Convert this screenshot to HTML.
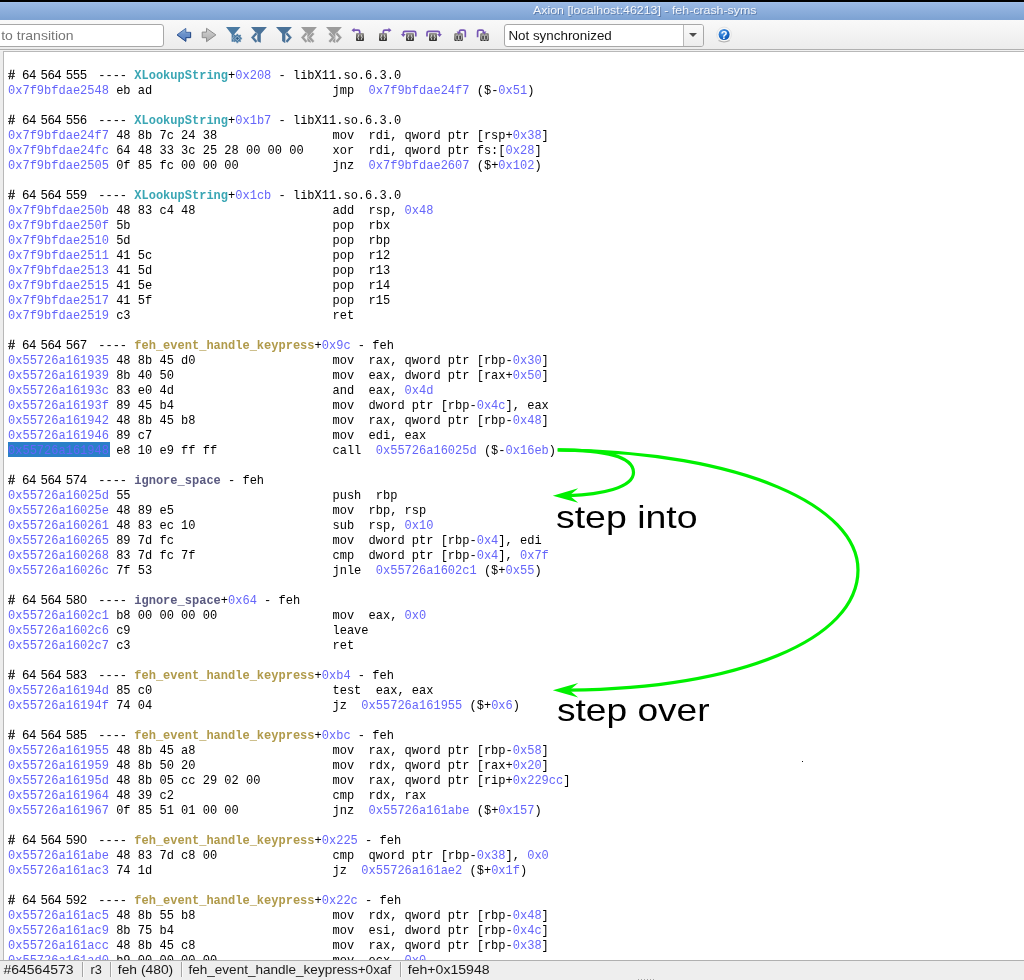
<!DOCTYPE html>
<html><head><meta charset="utf-8">
<style>
*{margin:0;padding:0;box-sizing:border-box}
html,body{width:1024px;height:980px;overflow:hidden;background:#fff}
body{position:relative;font-family:"Liberation Sans",sans-serif}
#blk{position:absolute;left:0;top:0;width:1024px;height:2px;background:#000}
#title{position:absolute;left:0;top:2px;width:1024px;height:18px;background:linear-gradient(#a6c4ec 0px,#9ab9e4 1px,#7ea3d3 17px);border-bottom:0}
#title span{position:absolute;left:533px;top:2px;font-size:12.3px;color:#f4f6fa;text-shadow:0 0 2px #4a6a98, 0 1px 1px #4a6a98;white-space:nowrap}
#tb{position:absolute;left:0;top:20px;width:1024px;height:29px;background:linear-gradient(#f9f9f9,#ececec)}
#tbl1{position:absolute;left:0;top:49px;width:1024px;height:1px;background:#b0b0b0}
#tbl2{position:absolute;left:0;top:50px;width:1024px;height:1px;background:#f2f2f2}
#lstrip{position:absolute;left:0;top:51px;width:3px;height:910px;background:#ededed}
#cont{position:absolute;left:3px;top:51px;width:1021px;height:910px;border-left:1px solid #b8b8b8;border-top:1px solid #b8b8b8;background:#fff;overflow:hidden}
#field{position:absolute;left:-10px;top:24px;width:174px;height:23px;border:1px solid #a8a8a8;border-radius:3px;background:#fff}
#field span{position:absolute;left:10px;top:3px;font-size:12.3px;color:#7a7a7a;white-space:nowrap}
#combo{position:absolute;left:504px;top:24px;width:200px;height:23px;border:1px solid #a8a8a8;border-radius:3px;background:#fff}
#combo span{position:absolute;left:4px;top:3px;font-size:12.3px;color:#1a1a1a;white-space:nowrap}
#combo .dd{position:absolute;left:178px;top:0;width:20px;height:21px;border-left:1px solid #b8b8b8;background:linear-gradient(#fafafa,#ececec);border-radius:0 2px 2px 0}
#combo .dd:after{content:"";position:absolute;left:5px;top:8px;border-left:4px solid transparent;border-right:4px solid transparent;border-top:4px solid #4c4c4c}
#code{position:absolute;left:8px;top:67px;width:1000px;height:893px;overflow:hidden}
#code .l{position:absolute;left:0;height:15px;line-height:15px;padding-top:2px;white-space:pre;font-family:"Liberation Mono",monospace;font-size:12.03px;color:#000}
#code b{font-weight:normal}
#code .n{color:#6565fa}
#hl{position:absolute;left:8px;top:442px;width:102px;height:15px;background:#2a7fc8}
#code .f{font-weight:bold}
#code .t{color:#3aa6b4}
#code .g{color:#b09a4a}
#code .s{color:#5a5a80}
#code i.num{font-style:normal;font-family:"Liberation Sans",sans-serif;font-size:12.5px;word-spacing:1.1px;display:inline-block;width:75.8px;padding-left:7px}
#code .h{padding-top:1px}
#code u{text-decoration:none;-webkit-text-stroke:0.35px #000}
#status{position:absolute;left:0;top:960px;width:1024px;height:20px;background:#eeeeee;border-top:1px solid #b0b0b0}
#status span{position:absolute;top:2px;font-size:12.3px;color:#1e1e1e;white-space:nowrap}
#status i{position:absolute;top:2px;width:1px;height:14px;background:#b4b4b4}
#big{position:absolute;font-family:"Liberation Sans",sans-serif;color:#000;white-space:nowrap}
svg{position:absolute;left:0;top:0;will-change:transform}
#code{will-change:transform}
</style></head><body>
<div id="blk"></div>
<div id="title"></div>
<div id="tb"></div>
<div id="field"></div>
<div id="combo"><div class="dd"></div></div>
<svg width="1024" height="60" viewBox="0 0 1024 60" style="position:absolute;left:0;top:0">
<defs>
<linearGradient id="gb" x1="0" y1="0" x2="0" y2="1"><stop offset="0" stop-color="#9cbfe0"/><stop offset="0.45" stop-color="#6a90c8"/><stop offset="1" stop-color="#5a84c8"/></linearGradient>
<linearGradient id="gg" x1="0" y1="0" x2="0" y2="1"><stop offset="0" stop-color="#d4d4d4"/><stop offset="1" stop-color="#aaaaaa"/></linearGradient>
<linearGradient id="gbox" x1="0" y1="0" x2="0" y2="1"><stop offset="0" stop-color="#9a9894"/><stop offset="0.5" stop-color="#5e5c58"/><stop offset="1" stop-color="#2a2a2a"/></linearGradient>
<radialGradient id="ghelp" cx="0.35" cy="0.3" r="0.8"><stop offset="0" stop-color="#5aa0ea"/><stop offset="0.6" stop-color="#1e6cc8"/><stop offset="1" stop-color="#0a4ea8"/></radialGradient>
</defs>
<text x="1.2" y="39.6" font-family="Liberation Sans" font-size="12.6" fill="#767676" textLength="72.4" lengthAdjust="spacingAndGlyphs">to transition</text>
<text x="508.4" y="39.8" font-family="Liberation Sans" font-size="12.6" fill="#161616" textLength="103.4" lengthAdjust="spacingAndGlyphs">Not synchronized</text>
<!-- back arrow -->
<path d="M177 34.8 L185.8 28.4 L185.8 32.3 L190.6 32.3 L190.6 37.6 L185.8 37.6 L185.8 41.3 Z" fill="url(#gb)" stroke="#3a609e" stroke-width="0.9" stroke-linejoin="round"/>
<path d="M190.6 32.3 L190.6 37.6 L185.8 37.6 L185.8 41.3 L177 34.8" fill="none" stroke="#274c88" stroke-width="0.9" stroke-linejoin="round"/>
<!-- forward arrow (gray) -->
<path d="M215.9 34.9 L206.5 28.3 L206.5 32.1 L202.2 32.1 L202.2 37.7 L206.5 37.7 L206.5 41.7 Z" fill="url(#gg)" stroke="#8c8c8c" stroke-width="1" stroke-linejoin="round"/>
<g fill="#4a7aa2">
<!-- filter gear -->
<path d="M226 27 L240.5 27 L234.5 34 L234 41.8 L231.6 41.8 L231.6 34.3 Z"/>
</g>
<g transform="translate(237.35 38.4)">
<path fill="#4a7aa2" stroke="#f2f2f2" stroke-width="0.35" d="M3.25 -1.31 L4.74 -0.75 L4.74 0.75 L3.25 1.31 L3.22 1.37 L3.88 2.82 L2.82 3.88 L1.37 3.22 L1.31 3.25 L0.75 4.74 L-0.75 4.74 L-1.31 3.25 L-1.37 3.22 L-2.82 3.88 L-3.88 2.82 L-3.22 1.37 L-3.25 1.31 L-4.74 0.75 L-4.74 -0.75 L-3.25 -1.31 L-3.22 -1.37 L-3.88 -2.82 L-2.82 -3.88 L-1.37 -3.22 L-1.31 -3.25 L-0.75 -4.74 L0.75 -4.74 L1.31 -3.25 L1.37 -3.22 L2.82 -3.88 L3.88 -2.82 L3.22 -1.37 Z"/>
<path d="M0 -2.3 L2.3 0 L0 2.3 L-2.3 0 Z" fill="none" stroke="#a8c0d4" stroke-width="0.9"/>
<path d="M0 -1.2 L1.2 0 L0 1.2 L-1.2 0 Z" fill="#2e5a80"/>
</g>
<!-- filter prev -->
<g fill="#4a7298">
<path d="M251 27 L266.9 27 L260.8 34.1 L260.8 42.75 L257.3 41.2 L257.3 34.5 Z"/>
<path d="M255.6 32.1 L257.6 34.1 L254.4 37.6 L257.6 41.1 L255.6 43.1 L250.9 37.6 Z" stroke="#f2f2f2" stroke-width="0.5"/>
</g>
<!-- filter next -->
<g fill="#4a7298">
<path d="M276 27 L291.9 27 L285.4 34.3 L285.4 42.75 L284.4 42.75 L282.1 40.9 L282.1 33.8 Z"/>
<path d="M287.3 32.1 L285.3 34.1 L288.5 37.6 L285.3 41.1 L287.3 43.1 L292 37.6 Z" stroke="#f2f2f2" stroke-width="0.5"/>
</g>
<!-- gray prev -->
<g fill="#9c9c9c">
<path d="M301 27 L316.9 27 L310.8 34.1 L310.8 42.75 L307.3 41.2 L307.3 34.5 Z"/>
</g>
<g fill="#9c9c9c" stroke="#f2f2f2" stroke-width="0.5">
<path d="M305.6 32.1 L307.6 34.1 L304.4 37.6 L307.6 41.1 L305.6 43.1 L300.9 37.6 Z"/>
<path d="M312.6 32.1 L314.6 34.1 L311.4 37.6 L314.6 41.1 L312.6 43.1 L307.9 37.6 Z"/>
</g>
<!-- gray next -->
<g fill="#9c9c9c">
<path d="M326 27 L341.9 27 L335.4 34.3 L335.4 42.75 L334.4 42.75 L332.1 40.9 L332.1 33.8 Z"/>
</g>
<g fill="#9c9c9c" stroke="#f2f2f2" stroke-width="0.5">
<path d="M337.3 32.1 L335.3 34.1 L338.5 37.6 L335.3 41.1 L337.3 43.1 L342 37.6 Z"/>
<path d="M330.3 32.1 L328.3 34.1 L331.5 37.6 L328.3 41.1 L330.3 43.1 L335 37.6 Z"/>
</g>
<!-- step boxes -->
<g>
<rect x="356" y="33" width="8" height="8" rx="1" fill="url(#gbox)"/>
<rect x="379" y="33" width="8" height="8" rx="1" fill="url(#gbox)"/>
<rect x="406" y="33" width="8" height="8" rx="1" fill="url(#gbox)"/>
<rect x="429" y="33" width="8" height="8" rx="1" fill="url(#gbox)"/>
<rect x="454.3" y="33" width="8.5" height="8" rx="1.2" fill="url(#gbox)"/>
<rect x="480.2" y="33" width="8.6" height="8" rx="1.2" fill="url(#gbox)"/>
</g>
<g fill="none" stroke="#e8e8e8" stroke-width="0.8">
<path d="M358.8 34.5 L358.2 37 L357.6 37.3 L358.2 37.7 L358.8 40 M361.2 34.5 L361.8 37 L362.4 37.3 L361.8 37.7 L361.2 40"/>
<path d="M381.8 34.5 L381.2 37 L380.6 37.3 L381.2 37.7 L381.8 40 M384.2 34.5 L384.8 37 L385.4 37.3 L384.8 37.7 L384.2 40"/>
<path d="M408.8 34.5 L408.2 37 L407.6 37.3 L408.2 37.7 L408.8 40 M411.2 34.5 L411.8 37 L412.4 37.3 L411.8 37.7 L411.2 40"/>
<path d="M431.8 34.5 L431.2 37 L430.6 37.3 L431.2 37.7 L431.8 40 M434.2 34.5 L434.8 37 L435.4 37.3 L434.8 37.7 L434.2 40"/>
</g>
<g fill="#3a3a3a" stroke="#e4e4e4" stroke-width="0.75">
<rect x="455.9" y="35" width="2.5" height="5.2" rx="1.1"/><rect x="458.9" y="35" width="2.5" height="5.2" rx="1.1"/>
<rect x="481.8" y="35" width="2.5" height="5.2" rx="1.1"/><rect x="484.8" y="35" width="2.5" height="5.2" rx="1.1"/>
</g>
<!-- purple arrows -->
<g fill="none" stroke="#7656b4" stroke-width="1.7" stroke-linejoin="round" stroke-linecap="butt">
<path d="M359.7 33.5 L359.7 31.8 Q359.7 30.2 358.1 30.2 L353.5 30.2"/>
<path d="M383.3 33.5 L383.3 31.8 Q383.3 30.2 384.9 30.2 L389.5 30.2"/>
<path d="M415.8 36.6 L415.8 32.9 Q415.8 31.3 414.2 31.3 L404.8 31.3 Q403.3 31.3 403.3 32.9 L403.3 34.5"/>
<path d="M427 36.6 L427 32.9 Q427 31.3 428.6 31.3 L438 31.3 Q439.5 31.3 439.5 32.9 L439.5 34.5"/>
<path d="M465.3 37.3 L465.3 31.8 Q465.3 30.2 463.7 30.2 L460.8 30.2 Q459.6 30.2 459.4 31.5 L459.2 32.6"/>
<path d="M477.6 37.3 L477.6 31.8 Q477.6 30.2 479.2 30.2 L482.1 30.2 Q483.3 30.2 483.5 31.5 L483.7 32.6"/>
</g>
<g fill="#7656b4">
<path d="M351.5 30.2 L354.5 27.8 L354.5 32.6 Z"/>
<path d="M391.5 30.2 L388.5 27.8 L388.5 32.6 Z"/>
<path d="M403.3 37 L400.9 34 L405.7 34 Z"/>
<path d="M439.5 37 L437.1 34 L441.9 34 Z"/>
<path d="M458.3 34.3 L456.6 31.2 L461.1 32.6 Z"/>
<path d="M484.7 34.3 L486.4 31.2 L481.9 32.6 Z"/>
</g>
<!-- help -->
<circle cx="724.1" cy="34.5" r="7.4" fill="none" stroke="#d8d8d8" stroke-width="1" opacity="0.6"/>
<path d="M718.5 40.6 Q724.1 43.4 729.7 40.6" fill="none" stroke="#9a9a9a" stroke-width="1.1" opacity="0.7"/>
<circle cx="724.1" cy="34.5" r="6.3" fill="#fbfbf8"/>
<circle cx="724.1" cy="34.5" r="5.5" fill="url(#ghelp)"/>
<text x="724.2" y="38.6" text-anchor="middle" font-family="Liberation Sans" font-weight="bold" font-size="11" fill="#fff">?</text>
</svg>

<div id="tbl1"></div><div id="tbl2"></div>
<div id="lstrip"></div>
<div id="cont"></div>
<div id="hl"></div>
<div id="code">
<div class="l h" style="top:0px"><u>#</u><i class="num">64 564 555</i><span class="rest"> ---- <b class="f t">XLookupString</b>+<b class="n">0x208</b> - libX11.so.6.3.0</span></div>
<div class="l" style="top:15px"><b class="n">0x7f9bfdae2548</b> eb ad                         jmp  <b class="n">0x7f9bfdae24f7</b> ($-<b class="n">0x51</b>)</div>
<div class="l h" style="top:45px"><u>#</u><i class="num">64 564 556</i><span class="rest"> ---- <b class="f t">XLookupString</b>+<b class="n">0x1b7</b> - libX11.so.6.3.0</span></div>
<div class="l" style="top:60px"><b class="n">0x7f9bfdae24f7</b> 48 8b 7c 24 38                mov  rdi, qword ptr [rsp+<b class="n">0x38</b>]</div>
<div class="l" style="top:75px"><b class="n">0x7f9bfdae24fc</b> 64 48 33 3c 25 28 00 00 00    xor  rdi, qword ptr fs:[<b class="n">0x28</b>]</div>
<div class="l" style="top:90px"><b class="n">0x7f9bfdae2505</b> 0f 85 fc 00 00 00             jnz  <b class="n">0x7f9bfdae2607</b> ($+<b class="n">0x102</b>)</div>
<div class="l h" style="top:120px"><u>#</u><i class="num">64 564 559</i><span class="rest"> ---- <b class="f t">XLookupString</b>+<b class="n">0x1cb</b> - libX11.so.6.3.0</span></div>
<div class="l" style="top:135px"><b class="n">0x7f9bfdae250b</b> 48 83 c4 48                   add  rsp, <b class="n">0x48</b></div>
<div class="l" style="top:150px"><b class="n">0x7f9bfdae250f</b> 5b                            pop  rbx</div>
<div class="l" style="top:165px"><b class="n">0x7f9bfdae2510</b> 5d                            pop  rbp</div>
<div class="l" style="top:180px"><b class="n">0x7f9bfdae2511</b> 41 5c                         pop  r12</div>
<div class="l" style="top:195px"><b class="n">0x7f9bfdae2513</b> 41 5d                         pop  r13</div>
<div class="l" style="top:210px"><b class="n">0x7f9bfdae2515</b> 41 5e                         pop  r14</div>
<div class="l" style="top:225px"><b class="n">0x7f9bfdae2517</b> 41 5f                         pop  r15</div>
<div class="l" style="top:240px"><b class="n">0x7f9bfdae2519</b> c3                            ret</div>
<div class="l h" style="top:270px"><u>#</u><i class="num">64 564 567</i><span class="rest"> ---- <b class="f g">feh_event_handle_keypress</b>+<b class="n">0x9c</b> - feh</span></div>
<div class="l" style="top:285px"><b class="n">0x55726a161935</b> 48 8b 45 d0                   mov  rax, qword ptr [rbp-<b class="n">0x30</b>]</div>
<div class="l" style="top:300px"><b class="n">0x55726a161939</b> 8b 40 50                      mov  eax, dword ptr [rax+<b class="n">0x50</b>]</div>
<div class="l" style="top:315px"><b class="n">0x55726a16193c</b> 83 e0 4d                      and  eax, <b class="n">0x4d</b></div>
<div class="l" style="top:330px"><b class="n">0x55726a16193f</b> 89 45 b4                      mov  dword ptr [rbp-<b class="n">0x4c</b>], eax</div>
<div class="l" style="top:345px"><b class="n">0x55726a161942</b> 48 8b 45 b8                   mov  rax, qword ptr [rbp-<b class="n">0x48</b>]</div>
<div class="l" style="top:360px"><b class="n">0x55726a161946</b> 89 c7                         mov  edi, eax</div>
<div class="l" style="top:375px"><b class="n sel">0x55726a161948</b> e8 10 e9 ff ff                call  <b class="n">0x55726a16025d</b> ($-<b class="n">0x16eb</b>)</div>
<div class="l h" style="top:405px"><u>#</u><i class="num">64 564 574</i><span class="rest"> ---- <b class="f s">ignore_space</b> - feh</span></div>
<div class="l" style="top:420px"><b class="n">0x55726a16025d</b> 55                            push  rbp</div>
<div class="l" style="top:435px"><b class="n">0x55726a16025e</b> 48 89 e5                      mov  rbp, rsp</div>
<div class="l" style="top:450px"><b class="n">0x55726a160261</b> 48 83 ec 10                   sub  rsp, <b class="n">0x10</b></div>
<div class="l" style="top:465px"><b class="n">0x55726a160265</b> 89 7d fc                      mov  dword ptr [rbp-<b class="n">0x4</b>], edi</div>
<div class="l" style="top:480px"><b class="n">0x55726a160268</b> 83 7d fc 7f                   cmp  dword ptr [rbp-<b class="n">0x4</b>], <b class="n">0x7f</b></div>
<div class="l" style="top:495px"><b class="n">0x55726a16026c</b> 7f 53                         jnle  <b class="n">0x55726a1602c1</b> ($+<b class="n">0x55</b>)</div>
<div class="l h" style="top:525px"><u>#</u><i class="num">64 564 580</i><span class="rest"> ---- <b class="f s">ignore_space</b>+<b class="n">0x64</b> - feh</span></div>
<div class="l" style="top:540px"><b class="n">0x55726a1602c1</b> b8 00 00 00 00                mov  eax, <b class="n">0x0</b></div>
<div class="l" style="top:555px"><b class="n">0x55726a1602c6</b> c9                            leave</div>
<div class="l" style="top:570px"><b class="n">0x55726a1602c7</b> c3                            ret</div>
<div class="l h" style="top:600px"><u>#</u><i class="num">64 564 583</i><span class="rest"> ---- <b class="f g">feh_event_handle_keypress</b>+<b class="n">0xb4</b> - feh</span></div>
<div class="l" style="top:615px"><b class="n">0x55726a16194d</b> 85 c0                         test  eax, eax</div>
<div class="l" style="top:630px"><b class="n">0x55726a16194f</b> 74 04                         jz  <b class="n">0x55726a161955</b> ($+<b class="n">0x6</b>)</div>
<div class="l h" style="top:660px"><u>#</u><i class="num">64 564 585</i><span class="rest"> ---- <b class="f g">feh_event_handle_keypress</b>+<b class="n">0xbc</b> - feh</span></div>
<div class="l" style="top:675px"><b class="n">0x55726a161955</b> 48 8b 45 a8                   mov  rax, qword ptr [rbp-<b class="n">0x58</b>]</div>
<div class="l" style="top:690px"><b class="n">0x55726a161959</b> 48 8b 50 20                   mov  rdx, qword ptr [rax+<b class="n">0x20</b>]</div>
<div class="l" style="top:705px"><b class="n">0x55726a16195d</b> 48 8b 05 cc 29 02 00          mov  rax, qword ptr [rip+<b class="n">0x229cc</b>]</div>
<div class="l" style="top:720px"><b class="n">0x55726a161964</b> 48 39 c2                      cmp  rdx, rax</div>
<div class="l" style="top:735px"><b class="n">0x55726a161967</b> 0f 85 51 01 00 00             jnz  <b class="n">0x55726a161abe</b> ($+<b class="n">0x157</b>)</div>
<div class="l h" style="top:765px"><u>#</u><i class="num">64 564 590</i><span class="rest"> ---- <b class="f g">feh_event_handle_keypress</b>+<b class="n">0x225</b> - feh</span></div>
<div class="l" style="top:780px"><b class="n">0x55726a161abe</b> 48 83 7d c8 00                cmp  qword ptr [rbp-<b class="n">0x38</b>], <b class="n">0x0</b></div>
<div class="l" style="top:795px"><b class="n">0x55726a161ac3</b> 74 1d                         jz  <b class="n">0x55726a161ae2</b> ($+<b class="n">0x1f</b>)</div>
<div class="l h" style="top:825px"><u>#</u><i class="num">64 564 592</i><span class="rest"> ---- <b class="f g">feh_event_handle_keypress</b>+<b class="n">0x22c</b> - feh</span></div>
<div class="l" style="top:840px"><b class="n">0x55726a161ac5</b> 48 8b 55 b8                   mov  rdx, qword ptr [rbp-<b class="n">0x48</b>]</div>
<div class="l" style="top:855px"><b class="n">0x55726a161ac9</b> 8b 75 b4                      mov  esi, dword ptr [rbp-<b class="n">0x4c</b>]</div>
<div class="l" style="top:870px"><b class="n">0x55726a161acc</b> 48 8b 45 c8                   mov  rax, qword ptr [rbp-<b class="n">0x38</b>]</div>
<div class="l" style="top:885px"><b class="n">0x55726a161ad0</b> b9 00 00 00 00                mov  ecx, <b class="n">0x0</b></div>
</div>
<svg width="1024" height="980" viewBox="0 0 1024 980" style="pointer-events:none">
<g fill="none" stroke="#00f000" stroke-width="3.2">
<path d="M557.7 449.8 C 600 450, 633.5 455, 633.5 472.5 C 633.5 488, 600 494.5, 569 495.6"/>
<path d="M557.7 449.8 C 745 452, 858 507, 858 570 C 858 640, 740 688, 569 690.2"/>
</g>
<g fill="#00f000">
<path d="M552.8 495.7 L578.2 488.3 L569.5 495.6 L578.2 502.8 Z"/>
<path d="M552.8 690.3 L578.2 682.9 L569.5 690.2 L578.2 697.4 Z"/>
</g>
<text x="556" y="528" font-family="Liberation Sans" font-size="32" fill="#000" textLength="141.5" lengthAdjust="spacingAndGlyphs">step into</text>
<text x="557" y="721" font-family="Liberation Sans" font-size="32" fill="#000" textLength="152.6" lengthAdjust="spacingAndGlyphs">step over</text>
</svg>
<div id="status"></div>
<svg width="1024" height="980" style="pointer-events:none">
<g fill="#a4a4a4"><rect x="82" y="962" width="1" height="15"/><rect x="110" y="962" width="1" height="15"/><rect x="181" y="962" width="1" height="15"/><rect x="400" y="962" width="1" height="15"/></g>
<g fill="#fbfbfb"><rect x="83" y="962" width="1" height="15"/><rect x="111" y="962" width="1" height="15"/><rect x="182" y="962" width="1" height="15"/><rect x="401" y="962" width="1" height="15"/></g>
<rect x="802" y="761" width="1" height="1" fill="#111"/>
<g fill="#a2a2a2"><rect x="638" y="979" width="1" height="1"/><rect x="641" y="979" width="1" height="1"/><rect x="644" y="979" width="1" height="1"/><rect x="647" y="979" width="1" height="1"/><rect x="650" y="979" width="1" height="1"/><rect x="653" y="979" width="1" height="1"/></g>
<g font-family="Liberation Sans" font-size="12.6" fill="#1a1a1a">
<text x="3.5" y="974" textLength="70" lengthAdjust="spacingAndGlyphs">#64564573</text>
<text x="90.5" y="974" textLength="11.3" lengthAdjust="spacingAndGlyphs">r3</text>
<text x="117.8" y="974" textLength="55.4" lengthAdjust="spacingAndGlyphs">feh (480)</text>
<text x="188.5" y="974" textLength="202.7" lengthAdjust="spacingAndGlyphs">feh_event_handle_keypress+0xaf</text>
<text x="407.8" y="974" textLength="81.8" lengthAdjust="spacingAndGlyphs">feh+0x15948</text>
</g>
<text x="533" y="14" font-family="Liberation Sans" font-size="11.6" fill="#3c5a88" fill-opacity="0.55" textLength="223.5" lengthAdjust="spacingAndGlyphs" transform="translate(1,1)">Axion [localhost:46213] - feh-crash-syms</text>
<text x="533" y="14" font-family="Liberation Sans" font-size="11.6" fill="#f4f7fb" textLength="223.5" lengthAdjust="spacingAndGlyphs">Axion [localhost:46213] - feh-crash-syms</text>
</svg>
</body></html>
